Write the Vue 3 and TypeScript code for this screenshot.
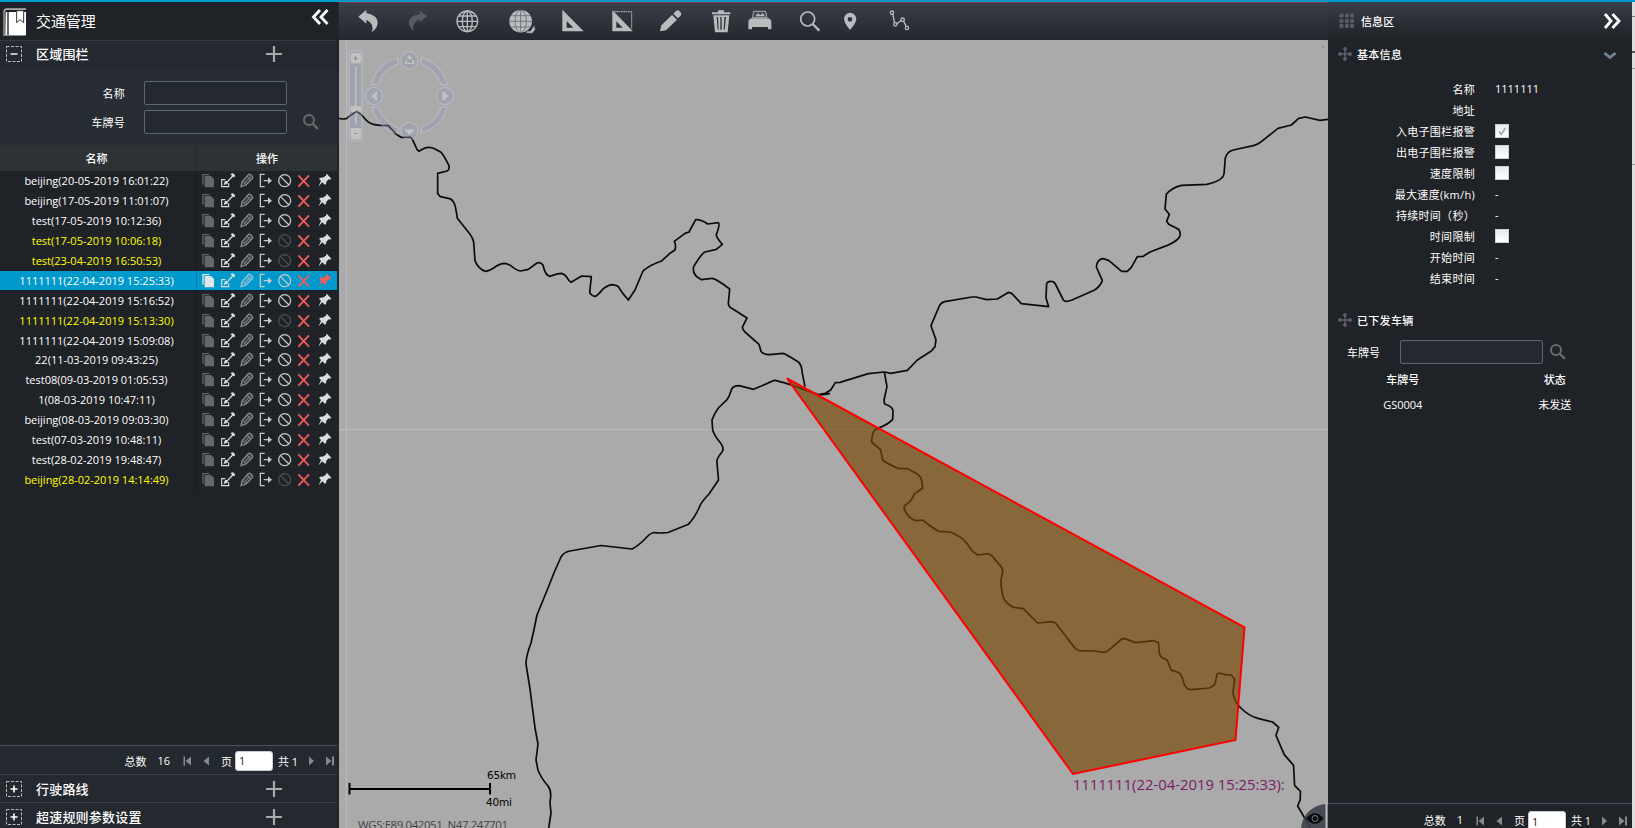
<script setup lang="ts">
interface FenceRow {
  name: string
  disabled?: boolean
  selected?: boolean
}

const rows: FenceRow[] = [
  { name: 'beijing(20-05-2019 16:01:22)' },
  { name: 'beijing(17-05-2019 11:01:07)' },
  { name: 'test(17-05-2019 10:12:36)' },
  { name: 'test(17-05-2019 10:06:18)', disabled: true },
  { name: 'test(23-04-2019 16:50:53)', disabled: true },
  { name: '1111111(22-04-2019 15:25:33)', selected: true },
  { name: '1111111(22-04-2019 15:16:52)' },
  { name: '1111111(22-04-2019 15:13:30)', disabled: true },
  { name: '1111111(22-04-2019 15:09:08)' },
  { name: '22(11-03-2019 09:43:25)' },
  { name: 'test08(09-03-2019 01:05:53)' },
  { name: '1(08-03-2019 10:47:11)' },
  { name: 'beijing(08-03-2019 09:03:30)' },
  { name: 'test(07-03-2019 10:48:11)' },
  { name: 'test(28-02-2019 19:48:47)' },
  { name: 'beijing(28-02-2019 14:14:49)', disabled: true },
]

interface InfoRow {
  label: string
  text?: string
  check?: boolean
}

const info: InfoRow[] = [
  { label: '名称', text: '1111111' },
  { label: '地址', text: '' },
  { label: '入电子围栏报警', check: true },
  { label: '出电子围栏报警', check: false },
  { label: '速度限制', check: false },
  { label: '最大速度(km/h)', text: '-' },
  { label: '持续时间（秒）', text: '-' },
  { label: '时间限制', check: false },
  { label: '开始时间', text: '-' },
  { label: '结束时间', text: '-' },
]

const coords = 'WGS:E89.042051  N47.247701'
</script>

<template>
  <div class="app">
    <div class="topbar"></div>
    <div class="columns">
      <aside class="left">
        <header class="left-head">
          <svg class="book" width="26" height="32" viewBox="6 18 78 96">
            <path d="M10 36Q10 26 20 25H78V30H20Q15 31 14 36V106H78V108H10Z" fill="#aaa" />
            <path d="M17 36H78V105H26V36H22V105H16Z" fill="#fff" />
            <path d="M50 32H71V68L60 59L50 68Z" fill="#fff" stroke="#333" stroke-width="3" />
          </svg>
          <h1>交通管理</h1>
          <svg class="fold" width="20" height="18" viewBox="0 0 20 18"><path d="M9 2L2.500 9L9 16M16.500 2L10 9L16.500 16" fill="none" stroke="#fff" stroke-width="2.800" /></svg>
        </header>

        <div class="section first">
          <svg width="16" height="16" viewBox="0 0 16 16"><rect x=".5" y=".5" width="15" height="15" fill="none" stroke="#bbb" stroke-dasharray="3 1.500" /><path d="M4.500 8h7" stroke="#fff" stroke-width="1.400" /></svg>
          <h2>区域围栏</h2>
          <svg class="plus" width="18" height="18" viewBox="0 0 18 18"><path d="M9 1V17M1 9H17" stroke="#aaa" stroke-width="2.200" /></svg>
        </div>

        <form class="filters">
          <div class="field"><label>名称</label><input type="text" /></div>
          <div class="field"><label>车牌号</label><input type="text" />
            <svg width="18" height="18" viewBox="0 0 18 18"><circle cx="7" cy="7" r="5" fill="none" stroke="#666b6c" stroke-width="2" /><path d="M10.500 10.500L16 16" stroke="#666b6c" stroke-width="2.400" /></svg>
          </div>
        </form>

        <div class="table-head"><div class="cell-name">名称</div><div class="cell-ops">操作</div></div>
        <div class="rows">
          <div v-for="row in rows" :key="row.name" class="row" :class="{ off: row.disabled, sel: row.selected }">
            <div class="cell-name">{{ row.name }}</div>
            <div class="cell-ops">
              <svg class="i-copy" viewBox="597 515 57 60"><path d="M607 524H628V528H611V556H607Z" /><path d="M614 530H633L642 539V564H614Z" /></svg>
              <svg class="i-edit" viewBox="654 515 57 60"><path d="M676 541H665V562H686V552" fill="none" stroke="currentColor" stroke-width="3.500" /><path d="M671 557L675 544L681 546L696 529L692 525L696 522Q699 521 702 524L705 528Q706 531 703 534L699 532L683 549V553Z" /></svg>
              <svg class="i-pencil" viewBox="711 515 57 60"><path d="M723 562L726 547L745 526Q748 523 752 526L757 531Q760 535 757 538L738 557Z" fill="currentColor" fill-opacity=".25" stroke="currentColor" stroke-width="3.400" /><path d="M728 546L739 557M734 551L752 532M741 531L752 542" fill="none" stroke="currentColor" stroke-width="2.600" /></svg>
              <svg class="i-export" viewBox="768 515 57 60"><path d="M794 525H781V562H794M791 544H809" fill="none" stroke="currentColor" stroke-width="3.800" /><path d="M804 534L816 544L804 554Z" /></svg>
              <svg class="i-ban" viewBox="825 515 57 60"><circle cx="854" cy="544" r="18" fill="none" stroke="currentColor" stroke-width="3.800" /><path d="M841 531L867 557" stroke="currentColor" stroke-width="3.800" /></svg>
              <svg class="i-cross" viewBox="882 515 57 60"><path d="M895 528L927 562M927 528L895 562" stroke="currentColor" stroke-width="5.500" /></svg>
              <svg class="i-pin" viewBox="945 515 57 60"><path d="M981 524L994 538L990 541L986 540L979 547Q980 553 975 557L967 549L956 561L957 558L963 545L957 538Q963 534 968 535L978 529L978 526Z" /></svg>
            </div>
          </div>
        </div>

        <div class="pager">
          <span class="p-total">总数</span><span class="p-count">16</span>
          <svg width="50" height="14" viewBox="0 0 50 14"><g fill="#858a8e"><path d="M13.500 2.500V11.500H15V2.500ZM21 2.500V11.500L15.500 7ZM39 2.500V11.500L33.500 7Z" /></g></svg>
          <span class="p-page">页</span><input value="1" /><span class="p-all">共 1</span>
          <svg width="40" height="14" viewBox="0 0 40 14"><g fill="#858a8e"><path d="M12 2.500V11.500L17 7ZM29 2.500V11.500L34.500 7ZM35 2.500V11.500H37V2.500Z" /></g></svg>
        </div>
        <div v-for="title in ['行驶路线', '超速规则参数设置']" :key="title" class="section bottom">
          <svg width="16" height="16" viewBox="0 0 16 16"><rect x=".5" y=".5" width="15" height="15" fill="none" stroke="#bbb" stroke-dasharray="3 1.500" /><path d="M4.500 8h7M8 4.500v7" stroke="#fff" stroke-width="1.600" /></svg>
          <h2>{{ title }}</h2>
          <svg class="plus" width="18" height="18" viewBox="0 0 18 18"><path d="M9 1V17M1 9H17" stroke="#aaa" stroke-width="2.200" /></svg>
        </div>
      </aside>

      <main class="center">
        <nav class="toolbar">
          <svg viewBox="57 20 84 84"><path d="M70 49L94 28V38Q128 44 128 69Q126 86 110 96Q120 71 94 58V70Z" /></svg>
          <svg viewBox="204 20 84 84"><path class="dim" d="M276 47L254 31V42Q222 46 222 68Q224 82 236 92Q228 68 254 57V67Z" /></svg>
          <svg viewBox="354 20 84 84"><g fill="none" stroke="#b9bbbd" stroke-width="4"><circle cx="397" cy="63" r="31" /><ellipse cx="397" cy="63" rx="15" ry="31" /><path d="M397 32V94M366 63H428M371 47H423M371 79H423" /></g></svg>
          <svg viewBox="517 20 84 84"><circle cx="555" cy="63" r="34" /><g fill="none" stroke="#555b64" stroke-width="2"><ellipse cx="555" cy="63" rx="17" ry="34" /><path d="M555 29V97M521 63H589M526 46H584M526 80H584" /></g><path d="M572 92L584 92L596 74L599 88L590 99H572Z" stroke="#333943" stroke-width="2" /></svg>
          <svg viewBox="669 20 84 84"><path fill-rule="evenodd" d="M682 28L746 93H682ZM695 62V82H715Z" /></svg>
          <svg viewBox="818 20 84 84"><path fill-rule="evenodd" d="M831 30L893 93H831ZM843 63V82H862Z" /><path d="M836 34H889V84" fill="none" stroke="#b9bbbd" stroke-width="3" stroke-dasharray="5 2" /></svg>
          <svg viewBox="81 20 84 84"><path d="M90 93L94 75L126 44L141 58L108 90ZM130 40L138 32Q144 27 150 34Q157 40 151 47L144 54Z" /></svg>
          <svg viewBox="230 20 84 84"><path fill-rule="evenodd" d="M245 36H263V30H281V36H300V42H245ZM249 45H297L292 96H254ZM259 50L262 88H265L263 50ZM270 50V88H274V50ZM282 50L280 88H283L287 50Z" /></svg>
          <svg viewBox="348 20 84 84"><path d="M371 33H407L411 52H367Z" fill="#444a54" stroke="#a9acaf" stroke-width="3" /><path d="M376 48L384 39L391 45L398 39L405 48Z" /><path d="M366 54H412Q424 55 424 66V87H414V80H366V87H355V66Q356 55 366 54Z" /></svg>
          <svg viewBox="495 20 84 84"><circle cx="533" cy="56" r="21" fill="none" stroke="#b9bbbd" stroke-width="5" /><path d="M548 71L568 91" stroke="#b9bbbd" stroke-width="7" /></svg>
          <svg viewBox="616 20 84 84"><path fill-rule="evenodd" d="M658 89Q640 67 640 56A18 18 0 0 1 677 56Q677 67 658 89ZM658 50A7 7 0 1 0 658 64A7 7 0 1 0 658 50Z" /></svg>
          <svg viewBox="765 20 84 84"><g fill="none" stroke="#b9bbbd" stroke-width="4"><path d="M788 41L794 68M801 70L814 60M821 63L829 79" /><circle cx="786" cy="37" r="5" /><circle cx="796" cy="72" r="5" /><circle cx="818" cy="58" r="5" /><circle cx="831" cy="83" r="5" /></g></svg>
        </nav>
        <svg class="map" width="989" height="788" viewBox="339 40 989 788">
          <path d="M346.500 40V828" stroke="#bcbcbc" /><path d="M339 429.500H1328" stroke="#bcbcbc" />
          <g class="road">
            <g transform="translate(335 90) scale(.33333)">
              <path d="M12 85L22 87L34 86L48 75L66 64L82 77Q98 98 112 102Q122 106 160 107L184 133L198 142L226 142Q230 144 234 152L246 178L252 184L262 178Q280 167 300 177L318 187Q326 194 342 227Q344 240 336 243L308 250V311L316 320L344 326Q356 330 361 350Q365 370 367 385L404 431Q414 444 416 456L420 512Q430 538 452 544Q466 541 476 534Q490 522 508 520Q520 520 535 533Q550 543 556 543L580 538L606 519Q616 515 624 525Q630 555 644 559Q668 550 680 550Q692 554 698 566Q702 574 708 577L740 558L769 560L764 608Q770 618 780 619Q786 619 805 596Q822 584 832 584Q846 586 850 590L864 611L880 630L900 600L924 543Q944 525 980 513L1006 489L1020 480Q1024 464 1018 454L1050 430L1062 426L1082 389Q1098 388 1118 402L1150 398Q1156 402 1144 434Q1144 442 1162 463L1144 478L1110 486Q1100 490 1076 530Q1070 555 1100 569L1130 565Q1140 563 1184 597L1180 640Q1180 650 1190 655L1236 684L1222 712Q1222 718 1230 726L1272 763L1278 784Q1286 795 1304 794L1344 790Q1350 790 1390 816Q1400 824 1402 850L1410 890" />
              <path d="M1133 1020L1131 990Q1138 970 1150 954L1176 929Q1184 918 1190 897Q1196 887 1212 887L1256 898L1318 871Q1340 874 1400 896L1450 914Q1474 914 1485 910" />
            </g>
            <path d="M712.700 430Q714 435 719 441Q725 448 722 452Q716 459 717 463L718.500 480L709 494Q701 502 699 508Q694 519 688 524.500L668 532.500Q660 533.500 654 532.500Q650 533 645 539Q638 546 632 549L601 545.500L570 551Q564 552 561 557Q554 572 548 588L537 615Q534 630 531 643Q526 656 526 664L530 689L535 728L538 744L536 760L538 770Q541 778 548 786Q551 790 550.700 796L550 803L551 813L548.700 828" />
            <g transform="translate(820 90) scale(.33333)">
              <path d="M0 913L16 910L32 900L46 878L60 877L145 851L193 846L212 850L262 841L292 810L334 783L345 770L348 750L333 707L358 648Q362 638 374 635L456 621H468L500 629L532 627L566 607L575 610L604 641L686 650L678 624L680 580Q684 573 694 574Q702 574 706 582L730 630Q736 638 756 630L824 600Q840 590 847 572L829 531Q831 508 849 506L866 511L905 544H922L934 532L952 500L970 499L990 486L1040 467Q1080 450 1081 433Q1080 418 1070 415L1046 403L1040 394L1048 373L1035 357L1039 313Q1056 292 1085 286L1160 283Q1196 275 1205 264Q1213 258 1213 240L1216 203Q1222 184 1240 180L1300 167Q1316 162 1324 155L1374 115L1414 105L1436 85L1456 81L1500 91L1524 88" />
              <path d="M193 846L201 890L192 930L194 942Q218 950 219 962L218 988Q205 1003 176 1014" />
            </g>
            <path transform="translate(780 370) scale(.34444 .33333)" d="M288 174L274 181Q266 195 266 216L292 239L298 270Q310 280 342 295L370 296Q400 310 408 322Q414 335 414 354Q400 365 390 372L380 392L360 409Q360 425 375 440Q385 450 395 452L414 450Q440 472 460 484L494 486Q530 502 540 517L560 545L574 555L604 551L614 556L642 590L647 602L641 634Q645 680 652 690Q665 708 680 712L706 716L748 759L790 755L800 759L856 834L868 842L915 843L938 847L950 844L992 807L1002 806L1032 818L1086 812L1099 818L1101 848Q1104 860 1110 863L1124 870L1136 901Q1156 906 1162 911Q1168 920 1172 938Q1178 958 1194 959L1246 954Q1262 948 1264 938L1269 912L1276 909L1292 914L1310 915L1320 928L1315 970Q1322 1000 1338 1014Q1360 1038 1390 1046L1430 1056L1448 1072L1440 1096L1464 1154L1491 1186L1494 1246L1511 1264L1510 1290L1503 1308L1540 1374" />
          </g>
          <polygon points="787,378.500 1244.500,627.300 1235.500,740 1073,774" fill="rgba(119,70,3,.67)" stroke="#f00" stroke-width="2" />
          <text x="1072.700" y="790" class="fence-label" textLength="212" lengthAdjust="spacingAndGlyphs">1111111(22-04-2019 15:25:33):</text>

          <g class="navigator">
            <g fill="#9398b5" stroke="#dadff0" stroke-width="1">
              <rect x="349" y="51" width="13" height="90" rx="2" />
              <path d="M398 57.500V64Q383 69 378 84.500H371.500Q377 63 398 57.500ZM421.500 57.500V64Q436 70 441.500 84.500H447.500Q441 63 421.500 57.500ZM371.500 107H378Q383 122 398 128V134Q377 128 371.500 107ZM447.500 107H441.500Q436 122 421.500 127V133Q441 128 447.500 107Z" />
              <circle cx="409.500" cy="60.500" r="8.500" /><circle cx="374" cy="96" r="8.500" /><circle cx="445" cy="96" r="8.500" /><circle cx="409.500" cy="131" r="8.500" />
            </g>
            <g fill="#e8e8ea">
              <rect x="350.500" y="53" width="10.500" height="10.500" rx="2" /><rect x="350.500" y="128" width="10.500" height="11.500" rx="2" /><rect x="350.500" y="106" width="10.500" height="6" /><path d="M355 67h1.500v57h-1.500z" />
              <path d="M409.500 55L415 64H404ZM371 96L377 91V101ZM448.500 96L442.500 91V101ZM409.500 135L404 129.500H415Z" />
            </g>
            <path d="M353.500 58.300h4M355.500 56.300v4M354 133.500h3M408 63v-4l3 4v-4" stroke="#555" fill="none" />
          </g>

          <path d="M349.500 789H490M349.500 783V794.500M490 783V794.500" stroke="#000" stroke-width="2" />
          <text x="487" y="779" class="scale" textLength="29">65km</text>
          <text x="486" y="806" class="scale" textLength="26">40mi</text>
          <text x="358" y="829" class="coords" textLength="150">{{ coords }}</text>
          <circle cx="1327" cy="830" r="26" fill="#3a3f49" opacity=".9" />
          <path d="M1306 818.500Q1315 808 1323.500 818.500Q1315 829 1306 818.500Z" fill="#08090b" /><circle cx="1315" cy="818.500" r="3" fill="none" stroke="#7b7f85" />
          <path d="M1322 46h2v2h-2z" fill="#8794b5" />
          <path d="M1326.500 803V828" stroke="#bcbcbc" stroke-width="2" />
        </svg>
      </main>

      <aside class="right">
        <header class="right-head">
          <svg width="16" height="16" viewBox="0 0 16 16" fill="#565a66"><g v-for="y in [2.500, 8, 13]" :key="y"><circle v-for="x in [2.500, 8, 13]" :key="x" :cx="x" :cy="y" r="2.200" /></g></svg>
          <h3>信息区</h3>
          <svg class="unfold" width="20" height="18" viewBox="0 0 20 18"><path d="M3 2L9 9L3 16M10.500 2L17 9L10.500 16" fill="none" stroke="#fff" stroke-width="2.800" /></svg>
        </header>
        <div class="sub-head">
          <svg width="14" height="14" viewBox="0 0 14 14" fill="#5b5f6c"><circle cx="7" cy="2" r="1.900" /><circle cx="7" cy="7" r="1.600" /><circle cx="7" cy="12" r="1.900" /><circle cx="2" cy="7" r="1.900" /><circle cx="12" cy="7" r="1.900" /><path d="M6.300 2h1.400v10H6.300zM2 6.300h10v1.400H2z" /></svg>
          <h3>基本信息</h3>
          <svg class="chevron" width="14" height="10" viewBox="0 0 14 10"><path d="M1.500 2L7 6.500L12.500 2" fill="none" stroke="#71849a" stroke-width="2.700" /></svg>
        </div>
        <dl class="info">
          <div v-for="item in info" :key="item.label" class="info-row">
            <dt>{{ item.label }}</dt>
            <dd><span v-if="item.check !== undefined" class="box"><svg v-if="item.check" width="12" height="12" viewBox="0 0 12 12"><path d="M2.500 6.500L5 10L10 2.500" fill="none" stroke="#999" stroke-width="1.700" /></svg></span><template v-else>{{ item.text }}</template></dd>
          </div>
        </dl>
        <div class="sub-head second">
          <svg width="14" height="14" viewBox="0 0 14 14" fill="#5b5f6c"><circle cx="7" cy="2" r="1.900" /><circle cx="7" cy="7" r="1.600" /><circle cx="7" cy="12" r="1.900" /><circle cx="2" cy="7" r="1.900" /><circle cx="12" cy="7" r="1.900" /><path d="M6.300 2h1.400v10H6.300zM2 6.300h10v1.400H2z" /></svg>
          <h3>已下发车辆</h3>
        </div>
        <div class="search"><label>车牌号</label><input type="text" />
          <svg width="18" height="18" viewBox="0 0 18 18"><circle cx="7" cy="7" r="5" fill="none" stroke="#666b6c" stroke-width="2" /><path d="M10.500 10.500L16 16" stroke="#666b6c" stroke-width="2.400" /></svg>
        </div>
        <div class="cars head"><span>车牌号</span><span>状态</span></div>
        <div class="cars"><span>GS0004</span><span>未发送</span></div>
        <div class="pager right-pager">
          <span class="p-total">总数</span><span class="p-count">1</span>
          <svg width="50" height="14" viewBox="0 0 50 14"><g fill="#858a8e"><path d="M13.500 2.500V11.500H15V2.500ZM21 2.500V11.500L15.500 7ZM39 2.500V11.500L33.500 7Z" /></g></svg>
          <span class="p-page">页</span><input value="1" /><span class="p-all">共 1</span>
          <svg width="40" height="14" viewBox="0 0 40 14"><g fill="#858a8e"><path d="M12 2.500V11.500L17 7ZM29 2.500V11.500L34.500 7ZM35 2.500V11.500H37V2.500Z" /></g></svg>
        </div>
      </aside>
      <div class="edge"></div>
    </div>
  </div>
</template>

<style>
body { overflow: hidden; background: #1f2226; }
</style>

<style scoped>
* { box-sizing: border-box; }
.app { width: 1635px; height: 828px; overflow: hidden; display: flex; flex-direction: column; color: #fff; font: 11px "Open Sans", "Noto Sans CJK SC", sans-serif; }
.topbar { height: 2px; flex: none; background: #0099cc; }
.columns { display: flex; height: 826px; }
h1, h2, h3, dl, dd, form { margin: 0; }
svg { display: block; flex: none; }
input { background: #242830; border: 1px solid #5b6772; border-radius: 2px; width: 143px; height: 24px; padding: 0; flex: none; }

.left { width: 339px; flex: none; display: flex; flex-direction: column; background: #1f2226; border-right: 2px solid #20242b; }
.left-head { height: 39px; border-bottom: 1px solid #343a45; display: flex; background: #1f2226; flex: none; }
.book { margin: 4px 0 0 2px; }
.left-head h1 { margin-left: 8px; font-size: 15px; font-weight: 400; line-height: 38px; letter-spacing: -.1px; }
.fold { margin: 6px 6px 0 auto; }
.section { height: 28px; display: flex; align-items: center; padding-left: 6px; background: #242930; flex: none; }
.section.first { padding-bottom: 2px; }
.section h2 { width: 229px; margin-left: 14px; font-size: 13px; font-weight: 500; letter-spacing: .2px; margin-top: -1px; }
.section.bottom { border-bottom: 1px solid #3a414c; }
.section.bottom:last-child { height: 25px; border: 0; overflow: hidden; padding-top: 2px; }
.filters { height: 76px; padding-top: 10px; background: #282d34; flex: none; }
.field { display: flex; align-items: center; height: 28px; margin-bottom: .5px; }
.field label { width: 125px; margin-right: 19px; text-align: right; letter-spacing: .2px; }
.field svg { margin-left: 15px; }
.table-head { height: 26px; display: flex; line-height: 27px; background: #2d3235; flex: none; font-weight: 500; }
.cell-name { width: 197px; text-align: center; border-right: 1px solid rgba(0, 0, 0, .2); flex: none; padding-right: 3px; white-space: nowrap; }
.table-head .cell-ops { width: 141px; text-align: center; }
.rows { flex: 1; }
.row { display: flex; height: 19.94px; line-height: 19px; border-bottom: 1px solid #1b1e22; }
.row .cell-name { line-height: 20.500px; height: 19px; }
.row .cell-ops { display: flex; flex: 1; padding-left: 2px; height: 19px; }
.row svg { width: 19px; height: 20px; fill: currentColor; color: #dcdcdc; }
.row .i-copy { color: #656868; }
.row .i-pencil { color: #929597; }
.row .i-export, .row .i-ban { color: #c8caca; }
.row .i-cross { color: #f15c5c; }
.row .i-pin { margin-left: 2px; }
.off .cell-name { color: #ffff00; }
.row.off .i-ban { color: #4e5154; }
.sel { background: #0099cc; }
.row.sel .i-copy { color: #e0e6e8; }
.row.sel .i-pencil { color: #a5c9d6; }
.row.sel .i-pin { color: #f15c5c; }

.pager { height: 30px; border-top: 1px solid #4a535d; border-bottom: 1px solid #3a414c; display: flex; align-items: center; justify-content: flex-end; background: #24292f; flex: none; overflow: hidden; }
.left .pager { padding-right: 0; padding-top: 1px; }
.p-total { margin-right: 11px; }
.p-page { width: 11px; margin-left: 1px; margin-right: 3px; }
.pager input { width: 38px; height: 20px; background: #fff; color: #222; border: 1px solid #c8cdd4; border-radius: 3px; padding-left: 3px; font: inherit; }
.p-all { width: 19px; margin-left: 5px; white-space: nowrap; }

.center { width: 989px; flex: none; }
.toolbar { height: 38px; padding: 4px 0 0 15px; border-top: 1px solid #783b45; display: grid; grid-template-columns: 49px 50px 54.5px 50.5px 49.5px 49.5px 49.5px 39.5px 49px 40.5px 49.5px 28px; background: linear-gradient(#393e48, #23272d); }
.toolbar svg { width: 28px; height: 28px; fill: #b9bbbd; }
.toolbar .dim { fill: #565b64; }
.map { background: #aaa; }
.road { fill: none; stroke: #0b0b0b; }
.road path { vector-effect: non-scaling-stroke; stroke-width: 1.700px; stroke-linejoin: round; }
.fence-label { font-size: 14.500px; fill: #7b1a68; }
.navigator { opacity: .4; }
.scale { font-size: 10.500px; fill: #000; font-family: "DejaVu Sans", sans-serif; }
.coords { font-size: 11.500px; fill: #444; white-space: pre; }

.right { width: 304px; flex: none; display: flex; flex-direction: column; background: #1f2226; }
.right-head { height: 38px; display: flex; align-items: center; padding-left: 11px; background: linear-gradient(#383e48, #1f2226); flex: none; }
h3 { font-size: 11px; font-weight: 500; letter-spacing: .3px; }
.right-head h3 { margin-left: 6px; letter-spacing: .1px; }
.unfold { margin: 0 10px 0 auto; }
.sub-head { height: 30px; display: flex; align-items: center; padding: 0 0 2px 10px; flex: none; }
.sub-head h3 { margin-left: 5px; }
.chevron { margin: 3px 15px 0 auto; }
.info { padding-top: 8px; }
.info-row { display: flex; height: 21px; align-items: center; }
dt { width: 147px; text-align: right; letter-spacing: .3px; white-space: nowrap; }
dd { margin-left: 20px; }
.box { display: block; width: 14px; height: 14px; padding: 1px; background: linear-gradient(#e6eaee, #fff); border: 1px solid #ccd0d5; }
.box svg { width: 10px; height: 10px; }
.second { margin-top: 18px; }
.search { display: flex; height: 30px; margin-top: 1px; align-items: center; padding-left: 19px; flex: none; }
.search label { width: 53px; }
.search svg { margin-left: 6px; }
.cars { display: flex; height: 25px; align-items: center; border-bottom: 1px solid #1b1e22; }
.cars span:first-child { width: 151px; text-align: center; }
.cars span:last-child { width: 156px; text-align: center; }
.cars.head { font-weight: 500; }
.right-pager { margin-top: auto; height: 25px; align-items: flex-start; background: #1f2226; border-bottom: 0; padding: 7px 2px 0 0; }
.right-pager svg { margin-top: 3px; }
.right-pager span { margin-top: 1px; }
.edge { width: 3px; background: linear-gradient(#ddd 0 14px, #777 14px 15px, #ddd 15px 49px, #555 49px 51px, #ddd 51px 66px, #999 66px 67px, #ddd 67px 162px, #999 162px 163px, #ddd 163px); }
</style>
